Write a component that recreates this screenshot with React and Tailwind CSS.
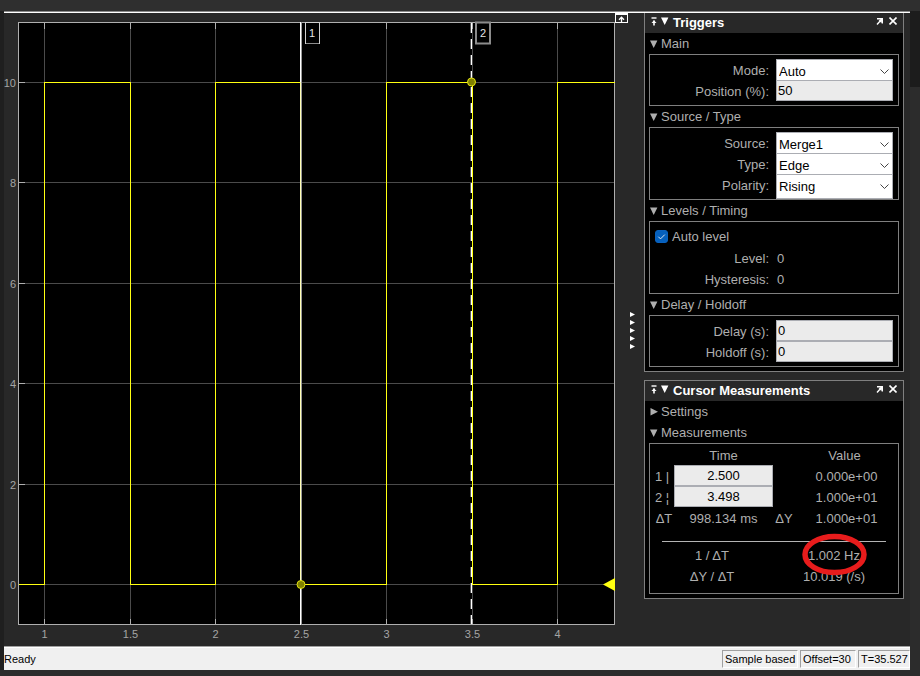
import React, { useState } from "react";

const X0 = 40.5;
const Y0 = 571.5;
const PLOT = { left: 14.5, top: 9.5, right: 610.5, bottom: 611.5 };
const px = (t) => Math.floor(X0 + (t - 1) * 171) + 0.5;
const py = (v) => Math.floor(Y0 - v * 50.2) + 0.5;

const X_TICKS = [1, 1.5, 2, 2.5, 3, 3.5, 4];
const Y_TICKS = [0, 2, 4, 6, 8, 10];

const SIGNAL = [
  [14.5, py(0)],
  [px(1), py(0)],
  [px(1), py(10)],
  [126.5, py(10)],
  [126.5, py(0)],
  [px(2), py(0)],
  [px(2), py(10)],
  [296.5, py(10)],
  [296.5, py(0)],
  [px(3), py(0)],
  [px(3), py(10)],
  [468.5, py(10)],
  [468.5, py(0)],
  [px(4), py(0)],
  [px(4), py(10)],
  [610.5, py(10)],
]
  .map((p) => p.join(","))
  .join(" ");

function ScopePlot() {
  return (
    <svg
      viewBox="0 0 624 633"
      preserveAspectRatio="xMinYMin meet"
      className="block w-full"
      fontFamily='"Liberation Sans", Arial, sans-serif'
      role="img"
      aria-label="Scope display"
    >
      <rect x="14" y="9" width="597" height="603" fill="#000" />
      <g stroke="#4b4b4b" shapeRendering="crispEdges">
        {X_TICKS.map((t) => (
          <line key={t} x1={px(t)} x2={px(t)} y1={PLOT.top} y2={PLOT.bottom} />
        ))}
        {Y_TICKS.map((v) => (
          <line key={v} x1={PLOT.left} x2={PLOT.right} y1={py(v)} y2={py(v)} />
        ))}
      </g>
      <g stroke="#afafaf" fill="none" shapeRendering="crispEdges">
        <rect x="14.5" y="9.5" width="596" height="602" />
        {X_TICKS.map((t) => (
          <path key={t} d={`M${px(t)} 9.5v6M${px(t)} 611.5v-6`} />
        ))}
        {Y_TICKS.map((v) => (
          <path key={v} d={`M14.5 ${py(v)}h6`} />
        ))}
      </g>
      <polyline points={SIGNAL} fill="none" stroke="#ffff11" shapeRendering="crispEdges" />

      <g shapeRendering="crispEdges">
        <rect x="296" y="9" width="1" height="603" fill="#ffffff" />
        <rect x="296" y="69" width="1" height="503" fill="#ffffb4" />
        <rect x="297" y="9" width="1" height="603" fill="#9a9a9a" />
        <line x1="467.5" x2="467.5" y1="10" y2="611" stroke="#fff" strokeDasharray="10 6" />
        <line x1="466.5" x2="466.5" y1="10" y2="611" stroke="#555" strokeDasharray="10 6" />
      </g>

      <g fill="#000">
        <rect x="301.5" y="9.5" width="14" height="21" stroke="#d0d0d0" />
        <rect x="302" y="30" width="13" height="1" fill="#8c8c8c" />
        <rect x="472" y="9.5" width="14" height="21" stroke="#8c8c8c" strokeWidth="2" />
      </g>
      <g fill="#e6e6e6" fontSize="11" textAnchor="middle">
        <text x="308" y="24">1</text>
        <text x="479" y="24">2</text>
      </g>

      <g fill="#808000" stroke="#e2e210" strokeWidth="1">
        <circle cx="297" cy="571.5" r="4" />
        <circle cx="467.5" cy="69" r="4" />
      </g>
      <polygon points="599,571.5 611,565 611,578" fill="#ffff11" />

      <g fill="#a5a5a5" fontSize="11">
        {X_TICKS.map((t) => (
          <text key={t} x={px(t)} y="625" textAnchor="middle">
            {t}
          </text>
        ))}
        {Y_TICKS.map((v) => (
          <text key={v} x="12" y={py(v) + 4} textAnchor="end">
            {v}
          </text>
        ))}
      </g>

      <g shapeRendering="crispEdges">
        <rect x="611.5" y="0.5" width="12" height="9" fill="#282828" stroke="#fff" />
        <path d="M612 1.5h11" stroke="#fff" />
      </g>
      <path d="M617.5 9V4.5M615 6.7L617.5 4.2L620 6.7" fill="none" stroke="#fff" strokeWidth="1.3" />
    </svg>
  );
}

function Triangle({ open = true }) {
  return (
    <svg width="8" height="8" viewBox="0 0 8 8" className="shrink-0 fill-current" aria-hidden="true">
      {open ? <path d="M0 0.5h7.4L3.7 8z" /> : <path d="M0.5 0v7.4L8 3.7z" />}
    </svg>
  );
}

function Panel({ title, first, children }) {
  return (
    <section
      className={`border border-[#7f7f7f] bg-black pb-1 ${first ? "border-t-0" : ""}`}
      aria-label={title}
    >
      <header className="flex h-5 items-center bg-[#282828] px-1.5 text-white">
        <button type="button" aria-label="Dock" className="mr-1 pb-1">
          <svg width="6" height="9" viewBox="0 0 6 9" className="block" fill="none" stroke="currentColor">
            <path d="M0.5 1h5" strokeWidth="1.4" />
            <path d="M3 8.5V3.5" strokeWidth="1.6" />
            <path d="M0.5 6L3 3.2L5.5 6z" fill="currentColor" stroke="none" />
          </svg>
        </button>
        <button type="button" aria-label="Collapse" className="mr-1 pb-1">
          <Triangle />
        </button>
        <h2 className="flex-1 text-[13px] leading-5 font-bold">{title}</h2>
        <button type="button" aria-label="Undock" className="mr-1.5 pb-1">
          <svg width="7" height="7" viewBox="0 0 7 7" className="block" fill="none" stroke="currentColor">
            <path d="M1 0.7h5.3V5.5" strokeWidth="1.4" />
            <path d="M6 1L1 6.4" strokeWidth="1.4" />
            <path d="M3.2 2.4L6 1L5.2 4.4z" fill="currentColor" strokeWidth="0.8" />
          </svg>
        </button>
        <button type="button" aria-label="Close" className="pb-1">
          <svg width="8" height="8" viewBox="0 0 8 8" className="block" fill="none" stroke="currentColor">
            <path d="M0.5 0.5l7 7M7.5 0.5l-7 7" strokeWidth="1.6" />
          </svg>
        </button>
      </header>
      <div className="px-1">{children}</div>
    </section>
  );
}

function SectionTitle({ open = true, children }) {
  return (
    <h3>
      <button type="button" aria-expanded={open} className="flex h-[21px] items-center gap-[3px] pl-px">
        <Triangle open={open} />
        {children}
      </button>
    </h3>
  );
}

function Box({ children }) {
  return <div className="border border-[#7f7f7f] py-1 pr-[5px]">{children}</div>;
}

const ROW = "flex h-[21px] items-start justify-end";
const LABEL = "mr-[7px] leading-6";
const FIELD = "border border-[#abadb3] bg-[#ebebeb] text-black outline-none";

function SelectRow({ label, id, value }) {
  return (
    <div className={ROW}>
      <label htmlFor={id} className={LABEL}>
        {label}
      </label>
      <div className="relative">
        <select
          id={id}
          defaultValue={value}
          className="block h-[25px] w-[117px] appearance-none border border-[#abadb3] bg-white pt-px pl-0.5 text-black outline-none"
        >
          <option>{value}</option>
        </select>
        <svg
          width="9"
          height="6"
          viewBox="0 0 9 6"
          className="pointer-events-none absolute top-2.5 right-1"
          fill="none"
          stroke="#444"
          aria-hidden="true"
        >
          <path d="M0.5 0.5l4 4l4-4" />
        </svg>
      </div>
    </div>
  );
}

function InputRow({ label, id, value }) {
  return (
    <div className={ROW}>
      <label htmlFor={id} className={LABEL}>
        {label}
      </label>
      <input id={id} defaultValue={value} className={`relative h-[21px] w-[117px] pl-px ${FIELD}`} />
    </div>
  );
}

function ValueRow({ label, value }) {
  return (
    <div className={ROW}>
      <span className={LABEL}>{label}</span>
      <span className="w-[117px] pl-px leading-6">{value}</span>
    </div>
  );
}

function Triggers() {
  const [auto, setAuto] = useState(true);
  return (
    <Panel title="Triggers" first>
      <SectionTitle>Main</SectionTitle>
      <Box>
        <SelectRow label="Mode:" id="mode" value="Auto" />
        <InputRow label="Position (%):" id="position" value="50" />
      </Box>
      <SectionTitle>Source / Type</SectionTitle>
      <Box>
        <SelectRow label="Source:" id="source" value="Merge1" />
        <SelectRow label="Type:" id="type" value="Edge" />
        <SelectRow label="Polarity:" id="polarity" value="Rising" />
      </Box>
      <SectionTitle>Levels / Timing</SectionTitle>
      <Box>
        <label className="flex h-[21px] items-center gap-1 pl-[5px]">
          <span className="grid">
            <input
              type="checkbox"
              checked={auto}
              onChange={(e) => setAuto(e.target.checked)}
              className="peer col-start-1 row-start-1 size-[13px] appearance-none rounded-[3px] border border-[#0a62bf] bg-white checked:bg-[#0560bd]"
            />
            <svg
              width="13"
              height="13"
              viewBox="0 0 13 13"
              className="pointer-events-none invisible col-start-1 row-start-1 peer-checked:visible"
              fill="none"
              stroke="#d8e6f5"
              aria-hidden="true"
            >
              <path d="M3.3 6.7l2.2 2.2l4.3-4.3" />
            </svg>
          </span>
          Auto level
        </label>
        <ValueRow label="Level:" value="0" />
        <ValueRow label="Hysteresis:" value="0" />
      </Box>
      <SectionTitle>Delay / Holdoff</SectionTitle>
      <Box>
        <InputRow label="Delay (s):" id="delay" value="0" />
        <InputRow label="Holdoff (s):" id="holdoff" value="0" />
      </Box>
    </Panel>
  );
}

const HEAD = "p-0 pt-0.5 font-normal";
const DATA = "p-0 pt-0.5";

function CursorMeasurements() {
  return (
    <Panel title="Cursor Measurements">
      <SectionTitle open={false}>Settings</SectionTitle>
      <SectionTitle>Measurements</SectionTitle>
      <div className="border border-[#7f7f7f] pb-[7px]">
        <table className="w-full table-fixed border-collapse text-center">
          <colgroup>
            <col className="w-6" />
            <col className="w-[99px]" />
            <col className="w-[22px]" />
            <col />
          </colgroup>
          <thead>
            <tr className="h-[21px]">
              <td className="p-0" />
              <th className={HEAD}>Time</th>
              <td className="p-0" />
              <th className={`pr-1 ${HEAD}`}>Value</th>
            </tr>
          </thead>
          <tbody>
            <tr className="h-[21px]">
              <th className={HEAD}>
                <label htmlFor="cursor1">1 |</label>
              </th>
              <td className="p-0">
                <input id="cursor1" defaultValue="2.500" className={`block h-[21px] w-full text-center ${FIELD}`} />
              </td>
              <td className="p-0" />
              <td className={DATA}>0.000e+00</td>
            </tr>
            <tr className="h-[21px]">
              <th className={HEAD}>
                <label htmlFor="cursor2">2 ¦</label>
              </th>
              <td className="p-0">
                <input id="cursor2" defaultValue="3.498" className={`block h-[21px] w-full text-center ${FIELD}`} />
              </td>
              <td className="p-0" />
              <td className={DATA}>1.000e+01</td>
            </tr>
            <tr className="h-[21px]">
              <th className={`pl-1 ${HEAD}`}>ΔT</th>
              <td className={DATA}>998.134 ms</td>
              <th className={HEAD}>ΔY</th>
              <td className={DATA}>1.000e+01</td>
            </tr>
          </tbody>
        </table>
        <hr className="mx-3 mt-[13px] mb-0.5 border-0 border-t border-[#b4b4b4]" />
        <table className="w-full table-fixed border-collapse text-center">
          <tbody>
            <tr className="h-[21px]">
              <th className={HEAD}>1 / ΔT</th>
              <td className={`pr-1 ${DATA}`}>
                <span className="relative">
                  1.002 Hz
                  <svg
                    width="66"
                    height="44"
                    viewBox="0 0 66 44"
                    className="pointer-events-none absolute top-1/2 left-1/2 -translate-x-1/2 -translate-y-1/2"
                    fill="none"
                    stroke="#e81c1c"
                    aria-hidden="true"
                  >
                    <ellipse cx="33.5" cy="21.5" rx="29.5" ry="18" strokeWidth="5.5" />
                  </svg>
                </span>
              </td>
            </tr>
            <tr className="h-[21px]">
              <th className={HEAD}>ΔY / ΔT</th>
              <td className={`pr-1 ${DATA}`}>10.019 (/s)</td>
            </tr>
          </tbody>
        </table>
      </div>
    </Panel>
  );
}

function Splitter() {
  return (
    <button
      type="button"
      aria-label="Collapse side panel"
      className="flex w-4 flex-col items-start gap-[3px] self-start pt-[299px] pl-0.5"
    >
      {[0, 1, 2, 3, 4].map((i) => (
        <svg key={i} width="5" height="5" viewBox="0 0 5 5" className="block fill-white">
          <path d="M0 0L5 2.5L0 5z" />
        </svg>
      ))}
    </button>
  );
}

const CELL =
  "h-[18px] border-t border-l border-[#a0a0a0] border-r border-b border-r-white border-b-white pl-0.5 leading-[17px]";

export default function App() {
  return (
    <div className="flex min-h-screen flex-col bg-[#2b2b2b] font-['Liberation_Sans',Arial,sans-serif] text-[13px] leading-4 text-[#afafaf]">
      <div className="h-[11px] bg-[#2f2f2f]" />
      <div className="flex">
        <div className="w-1 shrink-0 bg-[#1f1f1f]" />
        <main className="min-w-0 flex-1 bg-[#282828]">
          <div className="h-px bg-[#8a8a8a]" />
          <div className="h-px bg-white" />
          <div className="flex pr-1.5">
            <div className="min-w-0 flex-1">
              <ScopePlot />
            </div>
            <Splitter />
            <aside className="flex w-[260px] shrink-0 flex-col gap-2">
              <Triggers />
              <CursorMeasurements />
            </aside>
          </div>
          <footer className="flex h-6 border-t border-[#a0a0a0] bg-[#f0f0f0] text-[11px] text-black">
            <div className="flex flex-1 items-start border-t border-white pt-0.5">
              <span className="flex-1 leading-[18px]">Ready</span>
              <div className="flex gap-0.5">
                <span className={`w-[76px] ${CELL}`}>Sample based</span>
                <span className={`w-14 ${CELL}`}>Offset=30</span>
                <span className={`w-[52px] ${CELL}`}>T=35.527</span>
              </div>
            </div>
          </footer>
        </main>
        <div className="w-2.5 shrink-0 bg-[#2c2c2c]">
          <div className="h-[76px] bg-[#1c1c1c]" />
        </div>
      </div>
    </div>
  );
}
